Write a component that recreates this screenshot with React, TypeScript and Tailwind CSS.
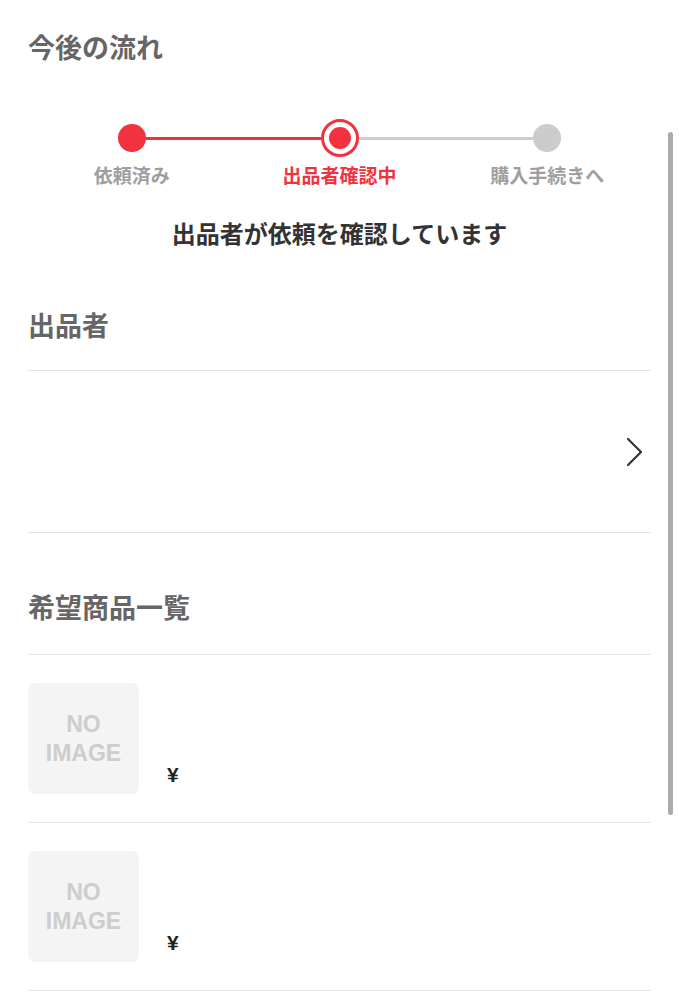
const jp = { fontFamily: '"Noto Sans CJK JP", "Noto Sans", sans-serif' }

type Step = { label: string; state: 'done' | 'current' | 'todo' }

const steps: Step[] = [
  { label: '依頼済み', state: 'done' },
  { label: '出品者確認中', state: 'current' },
  { label: '購入手続きへ', state: 'todo' },
]

function Stepper() {
  return (
    <div className="grid grid-cols-3 mt-[54px]">
      {steps.map((step, i) => {
        const leftColor =
          i === 0 ? 'bg-transparent' : step.state === 'todo' ? 'bg-[#cccccc]' : 'bg-[#f2333f]'
        const rightColor =
          i === steps.length - 1
            ? 'bg-transparent'
            : step.state === 'done'
              ? 'bg-[#f2333f]'
              : 'bg-[#cccccc]'
        return (
          <div key={step.label} className="flex flex-col items-center">
            <div className="flex items-center w-full h-[38px]">
              <div className={`flex-1 h-[3px] ${leftColor}`} />
              {step.state === 'current' ? (
                <div className="w-[38px] h-[38px] rounded-full border-[3px] border-[#f2333f] bg-white flex items-center justify-center">
                  <div className="w-[22px] h-[22px] rounded-full bg-[#f2333f]" />
                </div>
              ) : (
                <div
                  className={`w-[28px] h-[28px] rounded-full ${
                    step.state === 'done' ? 'bg-[#f2333f]' : 'bg-[#cccccc]'
                  }`}
                />
              )}
              <div className={`flex-1 h-[3px] ${rightColor}`} />
            </div>
            <div
              className={`mt-[6px] text-[19px] leading-[24px] font-bold ${
                step.state === 'current' ? 'text-[#f2333f]' : 'text-[#9e9e9e]'
              }`}
            >
              {step.label}
            </div>
          </div>
        )
      })}
    </div>
  )
}

function NoImage() {
  return (
    <div
      className="w-[111px] h-[111px] shrink-0 rounded-[7px] bg-[#f4f4f4] flex flex-col items-center justify-center text-[23px] leading-[29px] font-bold text-[#cdcdcd]"
      style={{ fontFamily: '"Liberation Sans", Arial, sans-serif' }}
    >
      <span>NO</span>
      <span>IMAGE</span>
    </div>
  )
}

function ItemRow() {
  return (
    <div className="flex border-t border-[#e3e3e3] py-[28px]">
      <NoImage />
      <div className="flex flex-col justify-end ml-[28px] pb-[6px]">
        <span
          className="text-[21px] leading-[26px] font-bold text-[#222]"
          style={{ fontFamily: '"Liberation Sans", Arial, sans-serif' }}
        >
          ¥
        </span>
      </div>
    </div>
  )
}

export default function App() {
  return (
    <div className="relative w-full min-h-screen bg-white" style={jp}>
      <div className="px-[28px] pt-[29px] pb-[40px]">
        <h2 className="text-[27px] leading-[36px] font-bold text-[#666]">今後の流れ</h2>

        <Stepper />

        <p className="mt-[30px] text-center text-[24px] leading-[32px] font-bold text-[#333]">
          出品者が依頼を確認しています
        </p>

        <h2 className="mt-[58px] text-[27px] leading-[36px] font-bold text-[#666]">出品者</h2>

        <div className="mt-[27px] border-t border-b border-[#e3e3e3] h-[163px] flex items-center justify-end pr-[7px]">
          <svg width="18" height="32" viewBox="0 0 18 32" fill="none" className="text-[#333]">
            <path
              d="M2 3 L15 16 L2 29"
              stroke="currentColor"
              strokeWidth={2.2}
              strokeLinecap="round"
              strokeLinejoin="round"
            />
          </svg>
        </div>

        <h2 className="mt-[56px] text-[27px] leading-[36px] font-bold text-[#666]">希望商品一覧</h2>

        <div className="mt-[29px] border-b border-[#e3e3e3]">
          <ItemRow />
          <ItemRow />
        </div>
      </div>

      {/* スクロールバー */}
      <div className="absolute left-[668px] top-[132px] w-[5px] h-[683px] rounded-full bg-[#ababab]" />
    </div>
  )
}
